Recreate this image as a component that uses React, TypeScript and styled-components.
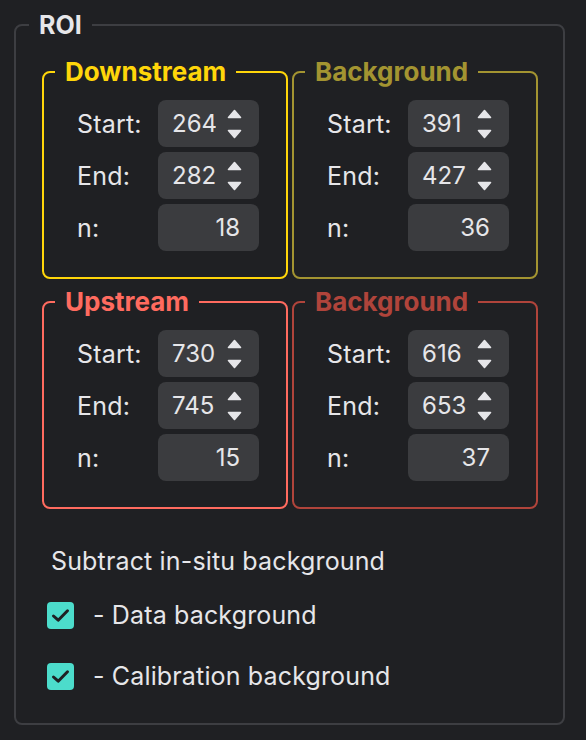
import React from "react";
import styled, { createGlobalStyle } from "styled-components";

const Global = createGlobalStyle`
  html, body { margin: 0; padding: 0; background: #1f2023; }
  body {
    font-family: Inter, "Noto Sans", "Liberation Sans", sans-serif;
    color: #e6e6e9;
    -webkit-font-smoothing: antialiased;
  }
  #root { padding: 10px 21px 16px 14px; }
`;

const Outer = styled.fieldset`
  margin: 0;
  padding: 0 13px 0 13px;
  border: 2px solid #3d3e42;
  border-radius: 8px;
  min-inline-size: 0;
  width: 551px;
  box-sizing: border-box;
`;

const OuterLegend = styled.legend`
  padding: 0 10px;
  font-size: 25px;
  line-height: 30px;
  font-weight: 700;
  color: #e6e6e9;
`;

const Grid = styled.div`
  display: grid;
  grid-template-columns: 1fr 1fr;
  column-gap: 4px;
  row-gap: 8px;
  padding: 17px 12px 0 13px;
`;

const Group = styled.fieldset<{ $color: string }>`
  margin: 0;
  padding: 0 11px;
  border: 2px solid ${(p) => p.$color};
  border-radius: 8px;
  min-inline-size: 0;
`;

const GroupLegend = styled.legend<{ $color: string }>`
  padding: 0 10px;
  font-size: 26px;
  line-height: 30px;
  font-weight: 700;
  color: ${(p) => p.$color};
`;

const Rows = styled.div`
  display: grid;
  grid-template-columns: 81px 101px;
  row-gap: 5px;
  align-items: center;
  padding: 13px 0 26px 22px;
`;

const Label = styled.label`
  font-size: 25px;
  line-height: 30px;
  letter-spacing: 0.2px;
`;

const Field = styled.div<{ $spin?: boolean }>`
  display: flex;
  align-items: center;
  justify-content: ${(p) => (p.$spin ? "flex-start" : "flex-end")};
  height: 47px;
  box-sizing: border-box;
  background: #3b3c3f;
  border-radius: 8px;
  padding: ${(p) => (p.$spin ? "0 17px 0 14px" : "0 19px 0 14px")};
`;

const Num = styled.input<{ $spin?: boolean }>`
  all: unset;
  width: ${(p) => (p.$spin ? "44px" : "100%")};
  font-family: Inter, "Noto Sans", "Liberation Sans", sans-serif;
  font-size: 24px;
  line-height: 30px;
  color: #e6e6e9;
  text-align: ${(p) => (p.$spin ? "left" : "right")};
  overflow: hidden;
`;

const Spinner = styled.svg`
  margin-left: auto;
  flex: none;
`;

const Options = styled.div`
  display: flex;
  flex-direction: column;
  padding: 37px 0 33px 18px;
`;

const Heading = styled.div`
  font-size: 25px;
  line-height: 30px;
  letter-spacing: 0.15px;
  padding-left: 4px;
  margin-bottom: 26px;
`;

const CheckRow = styled.label`
  display: flex;
  align-items: center;
  gap: 19px;
  font-size: 25px;
  line-height: 27px;
  letter-spacing: 0.15px;
  & + & { margin-top: 34px; }
`;

const Box = styled.span`
  width: 27px;
  height: 27px;
  border-radius: 4px;
  background: #4cdccb;
  display: flex;
  align-items: center;
  justify-content: center;
  flex: none;
`;

const SpinIcon = () => (
  <Spinner width="15" height="30" viewBox="0 0 15 30">
    <path d="M7.5 1.5 L13.5 8.5 L1.5 8.5 Z" fill="#e6e6e9" stroke="#e6e6e9" strokeWidth="1.6" strokeLinejoin="round" />
    <path d="M1.5 21.5 L13.5 21.5 L7.5 28.5 Z" fill="#e6e6e9" stroke="#e6e6e9" strokeWidth="1.6" strokeLinejoin="round" />
  </Spinner>
);

type G = { title: string; color: string; start: number; end: number; n: number };

const groups: G[] = [
  { title: "Downstream", color: "#ffd60a", start: 264, end: 282, n: 18 },
  { title: "Background", color: "#a39431", start: 391, end: 427, n: 36 },
  { title: "Upstream", color: "#ff6b5f", start: 730, end: 745, n: 15 },
  { title: "Background", color: "#b0443b", start: 616, end: 653, n: 37 },
];

const GroupBox = ({ g }: { g: G }) => (
  <Group $color={g.color}>
    <GroupLegend $color={g.color}>{g.title}</GroupLegend>
    <Rows>
      <Label>Start:</Label>
      <Field $spin>
        <Num $spin readOnly value={g.start} />
        <SpinIcon />
      </Field>
      <Label>End:</Label>
      <Field $spin>
        <Num $spin readOnly value={g.end} />
        <SpinIcon />
      </Field>
      <Label>n:</Label>
      <Field>
        <Num readOnly value={g.n} />
      </Field>
    </Rows>
  </Group>
);

const Check = () => (
  <Box>
    <svg width="19" height="15" viewBox="0 0 19 15">
      <path d="M2.5 8 L7.2 12.2 L16.5 2.8" fill="none" stroke="#1f2023" strokeWidth="3" strokeLinecap="round" strokeLinejoin="round" />
    </svg>
  </Box>
);

export default function App() {
  return (
    <>
      <Global />
      <Outer>
        <OuterLegend>ROI</OuterLegend>
        <Grid>
          {groups.map((g, i) => (
            <GroupBox key={i} g={g} />
          ))}
        </Grid>
        <Options>
          <Heading>Subtract in-situ background</Heading>
          <CheckRow>
            <Check />
            - Data background
          </CheckRow>
          <CheckRow>
            <Check />
            - Calibration background
          </CheckRow>
        </Options>
      </Outer>
    </>
  );
}
